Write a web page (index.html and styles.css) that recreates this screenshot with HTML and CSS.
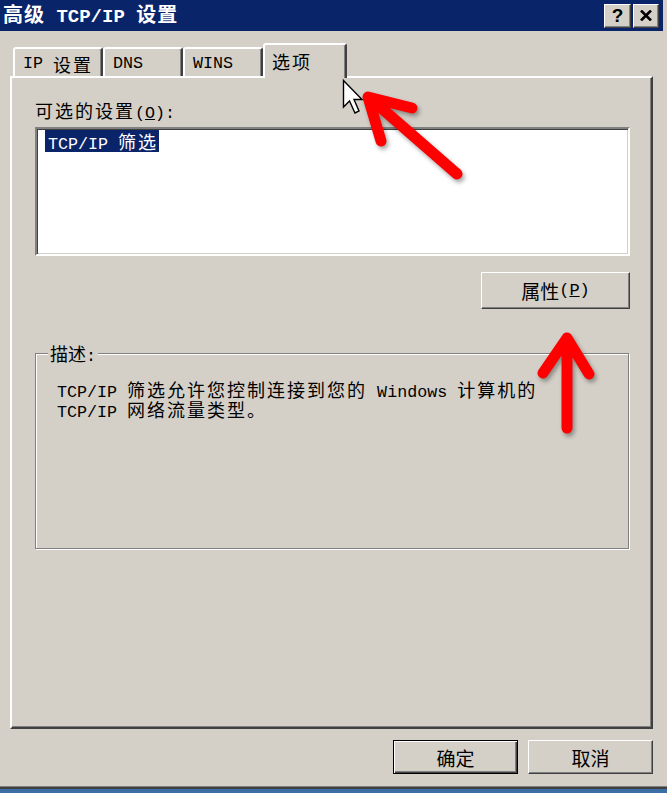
FILE: index.html
```html
<!DOCTYPE html>
<html lang="zh-CN">
<head>
<meta charset="utf-8">
<title>高级 TCP/IP 设置</title>
<link rel="stylesheet" href="styles.css">
</head>
<body>
<div class="window">
  <div class="titlebar">
    <div class="title"><span class="zh">高级</span> TCP/IP <span class="zh">设置</span></div>
    <div class="tb-buttons">
      <div class="tb-btn help">?</div>
      <div class="tb-btn close">
        <svg width="12" height="11" viewBox="0 0 12 11"><path d="M1 0.5 L11 10.5 M11 0.5 L1 10.5" stroke="#000" stroke-width="2.6" fill="none"/></svg>
      </div>
    </div>
  </div>
  <div class="tabs">
    <div class="tab t1">IP <span class="zh">设置</span></div>
    <div class="tab t2">DNS</div>
    <div class="tab t3">WINS</div>
    <div class="tab active"><span class="zh">选项</span></div>
  </div>
  <div class="panel">
    <div class="label"><span class="zh">可选的设置</span>(<u>O</u>):</div>
    <div class="listbox">
      <div class="item">TCP/IP <span class="zh">筛选</span></div>
    </div>
    <div class="row-right">
      <button class="btn prop"><span class="zh">属性</span>(<u>P</u>)</button>
    </div>
    <div class="group">
      <div class="legend"><span class="zh">描述</span>:</div>
      <p class="desc">TCP/IP <span class="zh">筛选允许您控制连接到您的</span> Windows <span class="zh">计算机的</span><br>TCP/IP <span class="zh">网络流量类型。</span></p>
    </div>
  </div>
  <div class="footer">
    <button class="btn default"><span class="zh">确定</span></button>
    <button class="btn"><span class="zh">取消</span></button>
  </div>
</div>
<svg class="overlay" width="667" height="793" viewBox="0 0 667 793">
  <g class="arrow">
    <path d="M457 174 L371 99 M412 108 L368 97 L381 141" />
    <path d="M567 428 L567 341 M543 373 L567 338 L589 374" />
  </g>
  <polygon class="cursor" points="343.5,80.5 343.5,107 349.5,101 355,113 359,111 354,99.5 362,99.5" />
</svg>
</body>
</html>
```

FILE: styles.css
```css
* { box-sizing: border-box; }

body {
  margin: 0;
  width: 667px;
  height: 793px;
  background: #3a6ea5;
  font-family: "Liberation Mono", "Noto Sans CJK SC", monospace;
  font-size: 16.7px;
  color: #000;
  position: relative;
  overflow: hidden;
}

.zh {
  font-family: "Noto Sans CJK SC", sans-serif;
  font-size: 18px;
  letter-spacing: 2px;
}

.window {
  width: 667px;
  height: 789px;
  background: #d4d0c8;
  border-bottom: 2px solid #404040;
  box-shadow: inset 0 -1px 0 #808080;
  display: flex;
  flex-direction: column;
}

.titlebar {
  height: 31px;
  margin-right: 4px;
  background: #0a246a;
  display: flex;
  align-items: center;
  justify-content: space-between;
  padding: 0 4px 0 3px;
}

.title {
  color: #fff;
  font-weight: bold;
  font-size: 19px;
  line-height: 31px;
  white-space: pre;
}

.title .zh {
  font-size: 20px;
  font-weight: bold;
  letter-spacing: 1px;
}

.tb-buttons {
  display: flex;
  gap: 2px;
}

.tb-btn {
  width: 27px;
  height: 24px;
  background: #d4d0c8;
  border: 1px solid;
  border-color: #fff #404040 #404040 #fff;
  box-shadow: inset -1px -1px 0 #808080;
  display: flex;
  align-items: center;
  justify-content: center;
}

.tb-btn.close { width: 26px; }

.tb-btn.help {
  font-family: "Liberation Sans", sans-serif;
  font-weight: bold;
  font-size: 19px;
  line-height: 1;
  padding-bottom: 1px;
}

.tabs {
  display: flex;
  align-items: flex-end;
  padding: 12px 0 0 13px;
  position: relative;
  z-index: 1;
}

.tab {
  height: 29px;
  width: 80px;
  padding: 2px 0 0 8px;
  border: 2px solid;
  border-bottom: none;
  border-color: #fff #404040 transparent #fff;
  border-radius: 3px 3px 0 0;
  box-shadow: inset -1px 0 0 #808080;
  background: #d4d0c8;
  display: flex;
  align-items: center;
  white-space: pre;
}

.tab.t1 { width: 90px; }

.tab.active {
  height: 35px;
  width: 84px;
  padding: 0 0 2px 7px;
  margin-bottom: -2px;
}

.panel {
  margin-left: 10px;
  width: 643px;
  height: 653px;
  border: 2px solid;
  border-color: #fff #404040 #404040 #fff;
  box-shadow: inset -1px -1px 0 #808080;
  padding: 22px 21px 0 23px;
}

.label {
  line-height: 20px;
  height: 20px;
}

.listbox {
  margin-top: 7px;
  height: 129px;
  width: 595px;
  background: #fff;
  border: 2px solid;
  border-color: #808080 #fff #fff #808080;
  box-shadow: inset 1px 1px 0 #404040, inset -1px -1px 0 #d4d0c8;
  padding: 1px 0 0 8px;
}

.item {
  display: inline-block;
  background: #0a246a;
  color: #fff;
  height: 22px;
  line-height: 22px;
  padding: 0 1px 0 3px;
  white-space: pre;
}

.row-right {
  display: flex;
  justify-content: flex-end;
  margin-top: 16px;
}

.btn {
  width: 125px;
  height: 34px;
  background: #d4d0c8;
  border: 1px solid;
  border-color: #fff #404040 #404040 #fff;
  box-shadow: inset -1px -1px 0 #808080;
  font-family: "Liberation Mono", "Noto Sans CJK SC", monospace;
  font-size: 17px;
  color: #000;
  padding: 0;
  display: flex;
  align-items: center;
  justify-content: center;
  white-space: pre;
}

.btn .zh {
  font-size: 19px;
  letter-spacing: 0;
}

.btn.prop {
  width: 149px;
  height: 37px;
}

.btn.default {
  border: 1px solid #000;
  box-shadow: inset 1px 1px 0 #fff, inset -1px -1px 0 #404040, inset -2px -2px 0 #808080;
}

.group {
  position: relative;
  margin-top: 44px;
  width: 594px;
  height: 196px;
  border: 1px solid #808080;
  box-shadow: 1px 1px 0 #fff, inset 1px 1px 0 #fff;
  padding: 27px 21px 0 21px;
}

.legend {
  position: absolute;
  top: -11px;
  left: 12px;
  padding: 0 2px;
  background: #d4d0c8;
  line-height: 20px;
}

.legend .zh { letter-spacing: 0; }

.desc {
  margin: 0;
  line-height: 17px;
  white-space: pre;
}

.desc .zh {
  display: inline-block;
  line-height: 17px;
  height: 17px;
}

.footer {
  display: flex;
  justify-content: flex-end;
  gap: 10px;
  padding-right: 14px;
  margin-top: 11px;
}

.overlay {
  position: absolute;
  top: 0;
  left: 0;
  pointer-events: none;
}

.arrow {
  fill: none;
  stroke: #ff0000;
  stroke-width: 11;
  stroke-linecap: round;
  stroke-linejoin: round;
  filter: drop-shadow(2px 3px 2px rgba(0, 0, 0, 0.35));
}

.cursor {
  fill: #fff;
  stroke: #000;
  stroke-width: 1.4;
  stroke-linejoin: miter;
}
```
